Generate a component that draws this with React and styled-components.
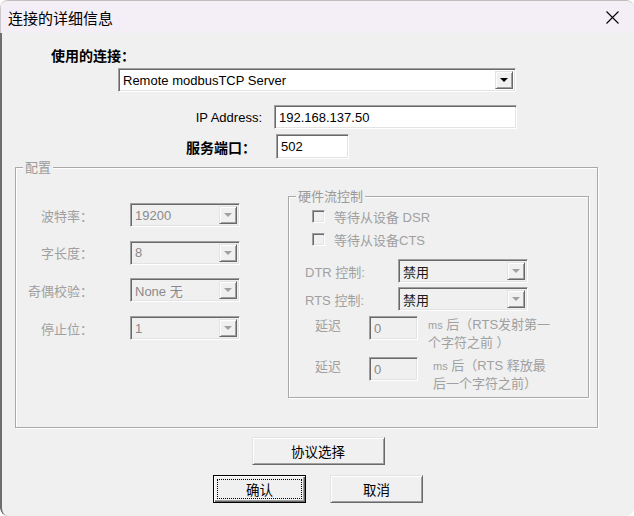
import React from "react";
import styled, { createGlobalStyle } from "styled-components";

const GlobalStyle = createGlobalStyle`
  html, body {
    margin: 0;
    padding: 0;
    background: #ffffff;
  }
  body {
    font-family: "Liberation Sans", "Noto Sans CJK SC", sans-serif;
    font-size: 13px;
    color: #000;
  }
  * { box-sizing: border-box; }
`;

const Window = styled.div`
  width: 634px;
  height: 516px;
  display: flex;
  flex-direction: column;
  border-top: 1px solid #bdbdbd;
  border-radius: 8px;
  overflow: hidden;
  background: #f0f0f0;
`;

const TitleBar = styled.div`
  height: 32px;
  flex: none;
  display: flex;
  align-items: center;
  justify-content: space-between;
  padding: 0 15px 0 7px;
  background: #f4eff6;
  border-left: 1px solid #c9c9c9;
  font-family: "Noto Sans CJK SC", sans-serif;
  font-size: 15px;
`;

const Body = styled.div`
  flex: 1;
  display: flex;
  flex-direction: column;
  padding: 14px 0 0 0;
  border-left: 2px solid #6e6e6e;
  border-bottom-left-radius: 8px;
`;

const BoldLabel = styled.div`
  font-family: "Noto Sans CJK SC", sans-serif;
  font-weight: 700;
  font-size: 14px;
  line-height: 16px;
  height: 16px;
  white-space: nowrap;
  margin-left: ${p => p.$ml || 0}px;
  margin-right: ${p => p.$mr || 0}px;
`;

const sunken = `
  border: 1px solid;
  border-color: #a0a0a0 #ffffff #ffffff #a0a0a0;
  box-shadow: inset 1px 1px #696969, inset -1px -1px #e3e3e3;
`;

const raised = `
  border: 1px solid;
  border-color: #e3e3e3 #696969 #696969 #e3e3e3;
  box-shadow: inset 1px 1px #ffffff, inset -1px -1px #a0a0a0;
`;

const ComboBox = styled.div`
  ${sunken}
  width: ${p => p.$w}px;
  height: 24px;
  flex: none;
  display: flex;
  align-items: stretch;
  padding: 2px;
  margin-left: ${p => p.$ml || 0}px;
  background: ${p => (p.$disabled ? "#f0f0f0" : "#ffffff")};
`;

const ComboText = styled.span`
  flex: 1;
  display: flex;
  align-items: center;
  padding-left: 2px;
  white-space: nowrap;
  overflow: hidden;
  font-size: 13px;
  color: ${p => p.$color || "#000"};
`;

const DropButton = styled.span`
  ${raised}
  width: 18px;
  flex: none;
  display: flex;
  align-items: center;
  justify-content: center;
  background: #f0f0f0;
`;

const Arrow = styled.span`
  width: 0;
  height: 0;
  border-left: 4px solid transparent;
  border-right: 4px solid transparent;
  border-top: 4px solid ${p => (p.$disabled ? "#a0a0a0" : "#000")};
`;

const TextBox = styled.div`
  ${sunken}
  width: ${p => p.$w}px;
  height: ${p => p.$h || 24}px;
  flex: none;
  display: flex;
  align-items: center;
  padding: 0 4px;
  margin-left: ${p => p.$ml || 0}px;
  background: ${p => (p.$disabled ? "#f0f0f0" : "#ffffff")};
  color: ${p => (p.$disabled ? "#8a8a8a" : "#000")};
  font-size: 13px;
`;

const ConnRow = styled.div`
  margin: 5px 0 0 116px;
`;

const AddressGrid = styled.div`
  display: grid;
  grid-template-columns: 260px auto;
  column-gap: 12px;
  row-gap: 5px;
  align-items: center;
  margin-top: 13px;
`;

const RightLabel = styled.div`
  justify-self: end;
  font-size: 13px;
`;

const Group = styled.fieldset`
  margin: 0;
  padding: 0;
  min-width: 0;
  border: 1px solid #a9a9a9;
  box-shadow: 1px 1px 0 #ffffff, inset 1px 1px 0 #ffffff;
  width: ${p => p.$w}px;
  height: ${p => p.$h}px;
  margin-left: ${p => p.$ml || 0}px;
  margin-top: ${p => p.$mt || 0}px;
  flex: none;
`;

const Legend = styled.legend`
  padding: 0 2px;
  margin-left: ${p => p.$ml}px;
  font-family: "Noto Sans CJK SC", sans-serif;
  font-size: 13px;
  line-height: 16px;
  color: #9a9a9a;
  background: #f0f0f0;
`;

const GroupContent = styled.div`
  display: flex;
  align-items: flex-start;
`;

const SettingsGrid = styled.div`
  display: grid;
  grid-template-columns: 77px 110px;
  column-gap: 37px;
  row-gap: 13.7px;
  align-items: center;
  margin-top: 28px;
`;

const GrayLabel = styled.div`
  justify-self: end;
  font-family: "Noto Sans CJK SC", sans-serif;
  font-size: 13px;
  color: #a0a0a0;
  white-space: nowrap;
`;

const FlowBody = styled.div`
  display: flex;
  flex-direction: column;
  padding-top: 4px;
  color: #a0a0a0;
`;

const CheckRow = styled.div`
  display: flex;
  align-items: center;
  height: 16px;
  margin: ${p => p.$mt || 0}px 0 0 23px;
  gap: 9px;
  white-space: nowrap;
`;

const CheckBox = styled.span`
  ${sunken}
  width: 13px;
  height: 13px;
  background: #f0f0f0;
  flex: none;
`;

const ControlRow = styled.div`
  display: flex;
  align-items: center;
  margin: ${p => p.$mt || 0}px 0 0 16px;
`;

const ControlLabel = styled.span`
  width: 93px;
  flex: none;
  white-space: nowrap;
`;

const DelayRow = styled.div`
  display: flex;
  align-items: flex-start;
  margin: ${p => p.$mt}px 0 0 26px;
`;

const DelayLabel = styled.span`
  width: 54px;
  flex: none;
  line-height: 18px;
  padding-top: 1px;
`;

const DelayNote = styled.div`
  margin-left: ${p => p.$ml}px;
  line-height: 17px;
  white-space: nowrap;
`;

const Small = styled.span`
  font-size: 11px;
`;

const ButtonArea = styled.div`
  display: flex;
  flex-direction: column;
  align-items: center;
  gap: 10px;
  margin-top: 9px;
`;

const ButtonRow = styled.div`
  display: flex;
  gap: 24px;
`;

const Button = styled.button`
  ${raised}
  width: ${p => p.$w}px;
  height: 28px;
  background: #f0f0f0;
  font-family: "Noto Sans CJK SC", sans-serif;
  font-size: 13.5px;
  color: #000;
  padding: 0;
  ${p =>
    p.$default &&
    `
    border-color: #000;
    box-shadow: inset 1px 1px #ffffff, inset -1px -1px #696969, inset -2px -2px #a0a0a0;
  `}
`;

const FocusRing = styled.span`
  display: flex;
  align-items: center;
  justify-content: center;
  margin: 3px;
  height: 20px;
  border: 1px dotted #000;
`;

function Combo({ w, value, disabled, color, ml }) {
  return (
    <ComboBox $w={w} $disabled={disabled} $ml={ml}>
      <ComboText $color={color}>{value}</ComboText>
      <DropButton>
        <Arrow $disabled={disabled} />
      </DropButton>
    </ComboBox>
  );
}

export default function App() {
  return (
    <>
      <GlobalStyle />
      <Window>
        <TitleBar>
          <span>连接的详细信息</span>
          <svg width="13" height="13" viewBox="0 0 13 13">
            <path d="M0.5 0.5 L12.5 12.5 M12.5 0.5 L0.5 12.5" stroke="#000" strokeWidth="1.1" fill="none" />
          </svg>
        </TitleBar>
        <Body>
          <BoldLabel $ml={49}>使用的连接：</BoldLabel>
          <ConnRow>
            <Combo w={398} value="Remote modbusTCP Server" />
          </ConnRow>
          <AddressGrid>
            <RightLabel>IP Address:</RightLabel>
            <TextBox $w={243}>192.168.137.50</TextBox>
            <RightLabel>
              <BoldLabel $mr={6}>服务端口：</BoldLabel>
            </RightLabel>
            <TextBox $w={73} $h={25} $ml={2}>502</TextBox>
          </AddressGrid>

          <Group $w={583} $h={269} $ml={13}>
            <Legend $ml={7}>配置</Legend>
            <GroupContent>
              <SettingsGrid>
                <GrayLabel>波特率：</GrayLabel>
                <Combo w={110} value="19200" disabled color="#8a8a8a" />
                <GrayLabel>字长度：</GrayLabel>
                <Combo w={110} value="8" disabled color="#8a8a8a" />
                <GrayLabel>奇偶校验：</GrayLabel>
                <Combo w={110} value="None 无" disabled color="#8a8a8a" />
                <GrayLabel>停止位：</GrayLabel>
                <Combo w={110} value="1" disabled color="#8a8a8a" />
              </SettingsGrid>

              <Group $w={301} $h={210} $ml={48} $mt={13}>
                <Legend $ml={7}>硬件流控制</Legend>
                <FlowBody>
                  <CheckRow>
                    <CheckBox />
                    <span>等待从设备 DSR</span>
                  </CheckRow>
                  <CheckRow $mt={7}>
                    <CheckBox />
                    <span>等待从设备CTS</span>
                  </CheckRow>
                  <ControlRow $mt={12}>
                    <ControlLabel>DTR 控制:</ControlLabel>
                    <Combo w={130} value="禁用" disabled color="#1a1a1a" />
                  </ControlRow>
                  <ControlRow $mt={4}>
                    <ControlLabel>RTS 控制:</ControlLabel>
                    <Combo w={130} value="禁用" disabled color="#1a1a1a" />
                  </ControlRow>
                  <DelayRow $mt={5}>
                    <DelayLabel>延迟</DelayLabel>
                    <TextBox $w={49} $disabled>0</TextBox>
                    <DelayNote $ml={10}>
                      <Small>ms</Small> 后（RTS发射第一
                      <br />
                      个字符之前 ）
                    </DelayNote>
                  </DelayRow>
                  <DelayRow $mt={6}>
                    <DelayLabel>延迟</DelayLabel>
                    <TextBox $w={49} $disabled>0</TextBox>
                    <DelayNote $ml={15}>
                      <Small>ms</Small> 后（RTS 释放最
                      <br />
                      后一个字符之前）
                    </DelayNote>
                  </DelayRow>
                </FlowBody>
              </Group>
            </GroupContent>
          </Group>

          <ButtonArea>
            <Button $w={133}>协议选择</Button>
            <ButtonRow>
              <Button $w={93} $default>
                <FocusRing>确认</FocusRing>
              </Button>
              <Button $w={93}>取消</Button>
            </ButtonRow>
          </ButtonArea>
        </Body>
      </Window>
    </>
  );
}
